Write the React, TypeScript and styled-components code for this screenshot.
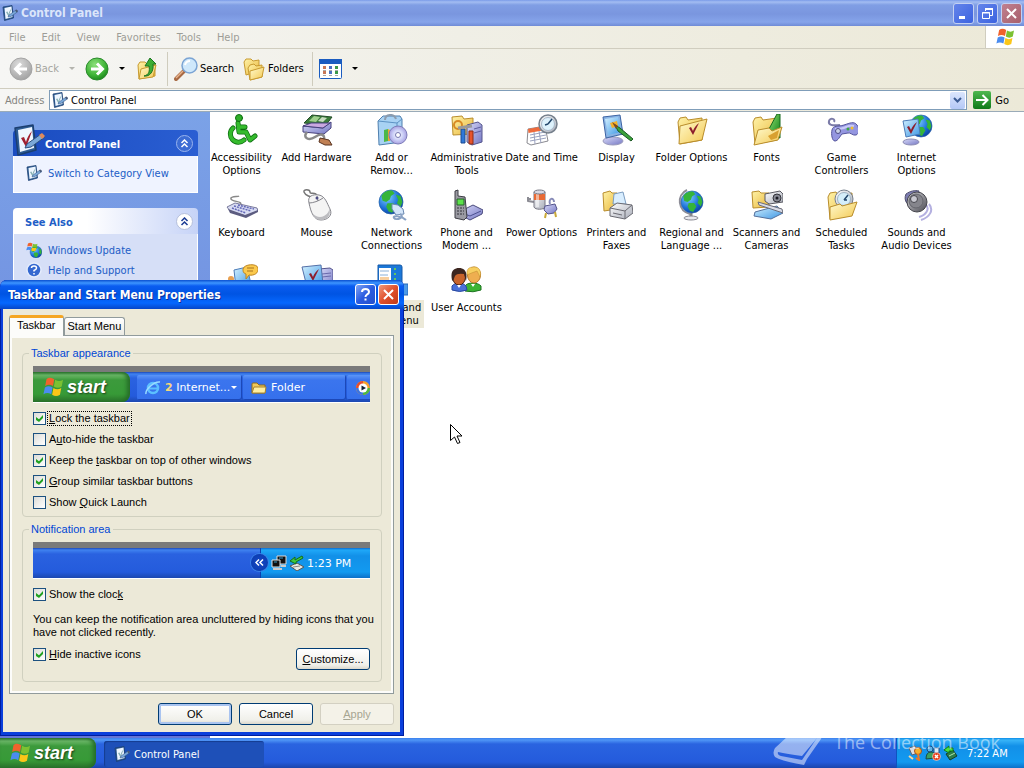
import React, { useState } from "react";
import styled, { createGlobalStyle } from "styled-components";

const TAHOMA = '"DejaVu Sans Condensed", Tahoma, "DejaVu Sans", sans-serif';
const WIDE = '"DejaVu Sans", Verdana, sans-serif';
const SANS = '"Liberation Sans", Arial, sans-serif';
const TITLE = '"DejaVu Sans Condensed", "Trebuchet MS", sans-serif';

const GlobalStyle = createGlobalStyle`
  * { box-sizing: border-box; }
  body { margin: 0; font: 11px/13px ${TAHOMA}; color: #000; }
  button, input { font: inherit; color: inherit; }
  button { padding: 0; border: 0; background: none; white-space: nowrap; }
  svg { display: block; flex: none; }
`;

/* ---------- shared paint ---------- */

const stops = (id: string, a: string, b: string, flat = false) => (
  <linearGradient id={id} x1="0" y1="0" x2={flat ? "0" : "1"} y2="1">
    <stop offset="0" stopColor={a} />
    <stop offset="1" stopColor={b} />
  </linearGradient>
);

const PaintStore = styled.svg`
  position: absolute;
`;

const Paints = () => (
  <PaintStore width="0" height="0" aria-hidden="true">
    <defs>
      {stops("folder", "#fff3a8", "#e9b73c")}
      {stops("folderFront", "#fffbd0", "#f3c850")}
      {stops("screen", "#d4f1ff", "#3c96e4")}
      {stops("grey", "#ffffff", "#a8acb8")}
      {stops("violet", "#d9daf8", "#7477c4")}
      {stops("green", "#4fb850", "#0f7a18", true)}
      {stops("leaf", "#8fe070", "#0d7d16")}
      {stops("dark", "#d8d8dc", "#4a4a52")}
      <radialGradient id="globe" cx=".35" cy=".3" r=".8">
        <stop offset="0" stopColor="#7fd2ff" />
        <stop offset=".6" stopColor="#1b6fd8" />
        <stop offset="1" stopColor="#0a3a96" />
      </radialGradient>
      <radialGradient id="disc" cx=".5" cy=".5" r=".5">
        <stop offset="0" stopColor="#fff" />
        <stop offset=".6" stopColor="#c9cdf6" />
        <stop offset="1" stopColor="#a8a0e0" />
      </radialGradient>
      <radialGradient id="goball" cx=".4" cy=".3" r=".8">
        <stop offset="0" stopColor="#8ce07a" />
        <stop offset=".6" stopColor="#3fb437" />
        <stop offset="1" stopColor="#127a14" />
      </radialGradient>
      <radialGradient id="greyball" cx=".4" cy=".3" r=".8">
        <stop offset="0" stopColor="#dcdcdc" />
        <stop offset="1" stopColor="#9c9c9c" />
      </radialGradient>
    </defs>
  </PaintStore>
);

const Globe = ({ x, y, r }: { x: number; y: number; r: number }) => (
  <g transform={`translate(${x} ${y}) scale(${r / 10})`}>
    <circle r="10" fill="url(#globe)" stroke="#2460a8" strokeWidth=".6" />
    <path d="M-8-5C-6-9-2-10 1-9.500L3-7 0-5-1-2-4 0-7-1ZM-3 1L2 1 4 4 1 9-2 8-4 4ZM4-6L8-5 9.500 0 8 4 5 1 6-2Z" fill="#35b43a" />
  </g>
);

const Folder = ({ children }: { children?: React.ReactNode }) => (
  <g strokeLinejoin="round">
    <path d="M2 8L4 4 10 3 12 6 26 4V26L4 30Z" fill="url(#folder)" stroke="#b98d2c" />
    {children}
  </g>
);

const Check = ({ at = "0 0" }: { at?: string }) => (
  <path transform={`translate(${at})`} d="M0 5L2 4 4 8C5 5 7 2 10 0 8 4 6 8 4 12Z" fill="#8d1d2c" />
);

type Art = { size?: number; children: React.ReactNode; box?: string };
const Glyph = ({ size = 32, box = "0 0 32 32", children }: Art) => (
  <svg width={size} height={size} viewBox={box} aria-hidden="true">
    {children}
  </svg>
);

const FlagShapes = () => (
  <g>
    <path d="M4 3C7 1 10 1.500 13 3L11.500 9C8.500 7.500 5.500 7.500 2.500 9Z" fill="#f0622c" />
    <path d="M14 3.500C17 5 20 5 23 3.500L21.500 9.500C18.500 11 15.500 11 12.500 9.500Z" fill="#7cc132" />
    <path d="M2.200 10.500C5 9 8 9 11 10.500L9.500 16.500C6.500 15 3.500 15 .5 16.500Z" fill="#4a8cf0" />
    <path d="M12 11C15 12.500 18 12.500 21 11L19.500 17C16.500 18.500 13.500 18.500 10.500 17Z" fill="#fbc618" />
  </g>
);
const Flag = ({ width }: { width: number }) => (
  <svg width={width} height={width} viewBox="0 1 23 18" aria-hidden="true" preserveAspectRatio="none">
    <FlagShapes />
  </svg>
);

const PanelIcon = ({ size = 16 }: { size?: number }) => (
  <Glyph size={size} box="0 0 32 32">
    <path d="M2 4L20 1 23 26 5 31Z" fill="#2d5c94" stroke="#1c3f70" strokeWidth="1.500" strokeLinejoin="round" />
    <path d="M5 6L19 3 21 24 7 28Z" fill="#eef6ff" />
    <path
      d="M8 14L11 13 13 18C14 14 16 10 19 7 17 13 15 18 13 23Z"
      fill={size > 16 ? "#a02030" : "#86b0b4"}
    />
    <path d="M14 20L28 10 32 13 18 23 12 24Z" fill="#7aa8d8" stroke="#2c4f80" />
    <path d="M26 11L29 9 32 12 29 15Z" fill={size > 16 ? "#e08a5c" : "#4c5c78"} />
  </Glyph>
);

/* ---------- control panel artwork ---------- */

const art: Record<string, React.ReactNode> = {
  access: (
    <g fill="none" strokeLinecap="round" strokeLinejoin="round">
      <g stroke="#0c6d10" strokeWidth="5">
        <path d="M12 9L13 18H20L24 26 29 22M13 13H19M7 14A8 8 0 1 0 18 26" />
      </g>
      <g stroke="#35bb2d" strokeWidth="3.500">
        <path d="M12 9L13 18H20L24 26 29 22M13 13H19M7 14A8 8 0 1 0 18 26" />
      </g>
      <circle cx="13" cy="4" r="3.500" fill="#2fae2a" stroke="#0c6d10" />
    </g>
  ),
  hardware: (
    <g strokeLinejoin="round">
      <path d="M3 9L11 1 31 3 25 11Z" fill="#3b7d3a" stroke="#234a28" />
      <path d="M8 7L13 2 19 3 15 8Z" fill="#9fd08c" />
      <path d="M17 7L21 3 26 4 22 8Z" fill="#c8dcc0" />
      <path d="M2 12L22 14 30 8V14L23 20 2 18Z" fill="url(#violet)" stroke="#46407c" />
      <path d="M2 12L10 9 29 9 22 14Z" fill="#c9a8e0" stroke="#46407c" />
      <path d="M6 18C1 24 8 27 14 23S24 20 23 26" fill="none" stroke="#8a8a8a" strokeWidth="2.500" />
      <path d="M19 24L28 26 31 31 24 31 18 28Z" fill="#c08054" stroke="#5a3420" />
    </g>
  ),
  programs: (
    <g strokeLinejoin="round">
      <path d="M2 7L7 2H24L26 5V28L3 31Z" fill="#a8d2f4" stroke="#4f7fae" />
      <path d="M2 7L21 9 26 5M21 9V29" fill="none" stroke="#5d92c4" />
      <path d="M9 6C9 0 18-1 20 5" fill="none" stroke="#8c9cae" strokeWidth="2" />
      <path d="M8 16L12 15V27L8 28Z" fill="#4cb84a" />
      <path d="M12 15L14 16V27L12 27Z" fill="#f4a430" />
      <circle cx="22" cy="21" r="9" fill="url(#disc)" stroke="#7d7cb8" />
      <circle cx="22" cy="21" r="2.500" fill="#fff" stroke="#7577b0" />
    </g>
  ),
  admin: (
    <g strokeLinejoin="round">
      <path d="M1 3L11 2 13 5 22 4V20L2 21Z" fill="url(#folder)" stroke="#b98d2c" />
      <path d="M16 11L27 8 31 11V28L21 31 16 28Z" fill="url(#violet)" stroke="#54548c" />
      <path d="M23 15L30 13M23 19L30 17" stroke="#5d5da0" />
      <circle cx="7" cy="11" r="4" fill="none" stroke="#d88a24" strokeWidth="2" />
      <path d="M10 15H14V29H10Z" fill="#2f78d8" stroke="#1c4a90" />
      <path d="M18 17H22V30H18Z" fill="#e8542c" stroke="#8d2c14" />
      <path d="M7 14L21 12" stroke="#999" strokeWidth="3" />
    </g>
  ),
  date: (
    <g strokeLinejoin="round">
      <path d="M2 15L19 12 22 27 5 31 1 29Z" fill="#fff" stroke="#8a8a90" />
      <path d="M2 15L19 12 19.500 16 2.500 19Z" fill="#ee6a3c" />
      <path d="M4 21L19 18M4 24L20 21M4 27L20 24M8 18L9 30M13 17L15 29" stroke="#9aa2c0" fill="none" />
      <circle cx="22" cy="10" r="9" fill="url(#grey)" stroke="#76808c" strokeWidth="1.500" />
      <circle cx="22" cy="10" r="6.500" fill="#def2fc" stroke="#a8b8c8" />
      <path d="M22 10L26 5M22 10L19 11" stroke="#24486c" strokeWidth="1.500" />
    </g>
  ),
  display: (
    <g strokeLinejoin="round">
      <ellipse cx="12" cy="27" rx="10" ry="4" fill="url(#violet)" stroke="#9a9abc" />
      <path d="M2 3L19 1 22 20 5 24Z" fill="#8ab4e4" stroke="#3c64a4" />
      <path d="M4 5L17 3 20 18 7 21Z" fill="url(#screen)" />
      <path d="M9 9L16 7 17 12 11 14Z" fill="#f4b02c" />
      <path d="M14 11L19 14 32 25 30 27 17 17Z" fill="#3ba23a" stroke="#1c5824" />
      <path d="M11 8L17 12 15 15Z" fill="#7a4a24" />
    </g>
  ),
  folderOptions: (
    <g>
      <Folder>
        <path d="M4 12L31 5 26 26 3 30Z" fill="url(#folderFront)" stroke="#b98d2c" />
      </Folder>
      <Check at="13 9" />
    </g>
  ),
  fonts: (
    <g>
      <Folder>
        <path d="M18 15L26 0H29L29 24 24 23Z" fill="url(#leaf)" stroke="#14691c" />
        <path d="M7 16L18 14 21 17 31 13 27 26 3 31Z" fill="url(#folderFront)" stroke="#b98d2c" />
        <path d="M17 22L28 16 26 24 20 26Z" fill="#d9a030" />
      </Folder>
    </g>
  ),
  game: (
    <g strokeLinejoin="round">
      <path d="M14 11C6 12 2 11 3 7S10 5 8 8" fill="none" stroke="#7c7ca8" strokeWidth="2" />
      <path d="M6 16C7 11 12 13 18 11S28 7 31 11 33 20 30 21 24 18 22 19L16 20C14 22 12 27 9 27S5 20 6 16Z" fill="#9496e0" stroke="#54549c" />
      <path d="M9 15Q16 15 20 13T28 12" fill="none" stroke="#c8caf8" strokeWidth="2" />
      <circle cx="12" cy="17" r="2.500" fill="#c8d0e8" stroke="#4c4c84" />
      <circle cx="26" cy="14" r="1.500" fill="#f0c030" />
      <circle cx="22" cy="15" r="1.500" fill="#3ca840" />
    </g>
  ),
  internet: (
    <g strokeLinejoin="round">
      <Globe x={20} y={12} r={11} />
      <ellipse cx="10" cy="28" rx="8" ry="3" fill="url(#violet)" stroke="#8c8cb4" />
      <path d="M2 7L17 5 19 20 5 23Z" fill="url(#screen)" stroke="#4c7cb8" />
      <Check at="6 8" />
    </g>
  ),
  keyboard: (
    <g strokeLinejoin="round">
      <path d="M14 16C18 12 6 13 5 10S12 8 13 7" fill="none" stroke="#888" strokeWidth="1.500" />
      <path d="M1 18L9 14 31 19 32 22 20 27 4 22Z" fill="#d8dcf2" stroke="#7a7a9c" />
      <path d="M2 20L19 26 32 21V23L20 29 4 24Z" fill="#5c5c80" />
      <path d="M8 17L25 22M12 16L28 20M6 19L20 24" stroke="#6468b8" strokeWidth="1.500" strokeDasharray="2 1" fill="none" />
    </g>
  ),
  mouse: (
    <g>
      <path d="M14 8C10 9 4 6 3 3S9 0 9 3 15 2 16 7" fill="none" stroke="#777" strokeWidth="1.500" />
      <path d="M8 14C6 7 12 5 18 6S26 14 29 20 27 31 20 31 10 24 8 14Z" fill="#f4f4f4" stroke="#85858c" />
      <path d="M28 18C31 26 26 31 20 31Q14 30 11 24 17 30 23 27T28 18Z" fill="#bcbcc0" />
      <path d="M8 14C12 14 18 12 22 9M16 7L17 12" stroke="#85858c" fill="none" />
      <circle cx="16" cy="9" r="1.500" fill="#4c4c84" />
    </g>
  ),
  network: (
    <g>
      <Globe x={15} y={13} r={12} />
      <path d="M16 15L22 16 27 20 28 25 20 26 16 20Z" fill="#d4e6fa" stroke="#6a88b0" />
      <path d="M24 25C30 28 20 32 18 29S26 27 30 31" fill="none" stroke="#8aa2c4" strokeWidth="2" />
    </g>
  ),
  phone: (
    <g strokeLinejoin="round">
      <path d="M10 22L22 16 32 21 31 25 19 31 9 26Z" fill="url(#violet)" stroke="#4a4a7c" />
      <path d="M14 25L19 27 30 22" fill="none" stroke="#4c5090" />
      <path d="M4 2L7 1V7L14 8 16 28 13 31 4 29Z" fill="#9a9aa2" stroke="#3c3c44" />
      <path d="M6 10H13V16H6Z" fill="#5ce04a" stroke="#27632a" />
      <path d="M6 19H13M6 22H13M6 25H13" stroke="#33333a" strokeDasharray="2 1" />
    </g>
  ),
  power: (
    <g strokeLinejoin="round">
      <path d="M8 13L2 12V8M2 10H5" fill="none" stroke="#8c8c94" strokeWidth="2" />
      <path d="M8 3H19V18C18 21 9 21 8 18Z" fill="url(#grey)" stroke="#777782" />
      <path d="M8 5H19V11H8Z" fill="#e86a34" />
      <path d="M10 5H13V18H10Z" fill="#fff" opacity=".5" />
      <ellipse cx="13.500" cy="3" rx="5.500" ry="2" fill="#d8d8e4" stroke="#777782" />
      <path d="M19 17L29 15 31 20 28 24 22 25 18 21Z" fill="url(#violet)" stroke="#54548c" />
      <path d="M20 24L19 29M29 23L30 28" stroke="#c8a838" strokeWidth="2" />
      <path d="M24 15C22 9 28 8 28 13" fill="none" stroke="#888cb8" strokeWidth="2" />
    </g>
  ),
  printer: (
    <g strokeLinejoin="round">
      <path d="M2 4L9 2 11 4H16V20L3 22Z" fill="url(#folder)" stroke="#b98d2c" />
      <path d="M13 5L22 3 25 15H12Z" fill="#d9eeff" stroke="#7b9cc0" />
      <path d="M9 19L16 14 31 16 32 24 24 30 9 27Z" fill="url(#grey)" stroke="#6a6a72" />
      <path d="M9 19L24 22 31 16M24 22V30M12 24L21 26" fill="none" stroke="#6a6a72" />
    </g>
  ),
  regional: (
    <g>
      <path d="M15 28V24" stroke="#888" strokeWidth="3" />
      <ellipse cx="15" cy="29" rx="7" ry="2" fill="#e8e8ee" stroke="#8a8a94" />
      <path d="M11 1C0 6 2 22 14 25" fill="none" stroke="#8c8c96" strokeWidth="2" />
      <Globe x={16} y={13} r={11} />
    </g>
  ),
  scanner: (
    <g strokeLinejoin="round">
      <path d="M1 3L8 2 10 4H18V18L2 19Z" fill="url(#folder)" stroke="#b98d2c" />
      <path d="M4 23L26 17 32 24 20 30 3 27Z" fill="url(#screen)" stroke="#54709c" />
      <path d="M7 13L31 20 32 24 8 16Z" fill="#d8dce8" stroke="#6c6c78" />
      <path d="M14 5L29 2 32 5V13L18 15 14 12Z" fill="url(#grey)" stroke="#5a5a62" />
      <circle cx="26" cy="9" r="4" fill="#888a94" stroke="#33333a" />
      <circle cx="26" cy="9" r="1.500" fill="#1c1c24" />
    </g>
  ),
  tasks: (
    <g>
      <Folder>
        <circle cx="18" cy="10" r="9" fill="url(#grey)" stroke="#76808c" />
        <circle cx="18" cy="10" r="6.500" fill="#d4eefa" stroke="#a0b4c4" />
        <path d="M18 11L22 6M18 11H21" stroke="#24486c" strokeWidth="1.500" />
        <path d="M4 18L14 15 16 17 31 13 26 27 4 31Z" fill="url(#folderFront)" stroke="#b98d2c" />
      </Folder>
    </g>
  ),
  sounds: (
    <g>
      <path d="M25 16C29 20 25 26 18 28M28 15C33 21 29 28 20 31" fill="none" stroke="#b4b0e0" strokeWidth="2" />
      <path d="M5 5C9 2 14 1 18 2L13 18C7 17 2 12 5 5Z" fill="#7c7cb0" stroke="#4c4c6c" />
      <circle cx="16" cy="13" r="10" fill="url(#dark)" stroke="#45454c" />
      <circle cx="15" cy="12" r="7" fill="#85858c" stroke="#65656c" />
      <circle cx="13" cy="10" r="3.500" fill="#c8c8d0" stroke="#45454c" />
    </g>
  ),
  speech: (
    <g strokeLinejoin="round">
      <path d="M8 6L21 3 25 20 10 24Z" fill="url(#screen)" stroke="#4c7cb8" />
      <circle cx="5" cy="15" r="3" fill="#e8a050" />
      <path d="M17 5C18 0 31-1 32 4S28 12 23 11L20 15 20 10C17 9 17 7 17 5Z" fill="#fbc94c" stroke="#bd8420" />
      <path d="M21 4H28M21 7H27" stroke="#a87420" />
    </g>
  ),
  system: (
    <g strokeLinejoin="round">
      <path d="M18 5L29 4 32 6V26L21 28 18 25Z" fill="url(#violet)" stroke="#54548c" />
      <path d="M21 10L30 9M21 13L30 12" stroke="#6a6aac" />
      <path d="M1 3L20 1 22 20 6 23Z" fill="url(#screen)" stroke="#5470a8" />
      <Check at="8 5" />
    </g>
  ),
  taskbar: (
    <g>
      <path d="M2 1H24Q26 1 26 3V26H2Z" fill="#1c78d8" stroke="#1458a8" />
      <path d="M3 4H15V25H3Z" fill="#fff" />
      <path d="M4 7H13M4 11H12M5 19H12" stroke="#8ab0d8" />
      <path d="M4 14H13M4 16H13" stroke="#f0a040" />
      <path d="M18 5H20M18 10H20M18 15H20" stroke="#64c860" strokeWidth="2" />
      <path d="M10 20H32V31H10Z" fill="#4c9ae8" stroke="#2868b8" />
    </g>
  ),
  users: (
    <g strokeLinejoin="round">
      <path d="M14 27V22C16 18 27 18 30 22V26Q22 29 14 27Z" fill="#3bb434" stroke="#1c7420" />
      <ellipse cx="23" cy="11" rx="6.500" ry="8" fill="#eeae50" stroke="#b87828" />
      <path d="M16 11C15 3 20 3 24 3S31 8 29 13L26 7Q20 9 16 11Z" fill="#f7cf60" stroke="#bd8b2c" strokeWidth=".5" />
      <path d="M1 26V22C4 18 12 18 15 22L16 26Q9 29 1 26Z" fill="#4a70d8" stroke="#2848a0" />
      <ellipse cx="8" cy="13" rx="6.500" ry="8" fill="#c8642c" stroke="#401c10" />
      <path d="M1 16C-1 7 3 4 8 4S17 7 15 17L13 10Q6 9 4 12L2 17Z" fill="#3c2620" />
      <path d="M6 21L8 24 10 21M20 20L22 23 24 20" fill="#fff" />
    </g>
  ),
};

/* ---------- explorer window ---------- */

const Desktop = styled.div`
  position: relative;
  display: flex;
  flex-direction: column;
  min-height: 100vh;
  overflow: hidden;
  background: #fff;
`;

const TitleBar = styled.header`
  display: flex;
  align-items: center;
  gap: 3px;
  height: 26px;
  padding: 0 2px;
  background: linear-gradient(#7a9be8 0, #a3bdf2 2px, #809ee4 5px, #7a96df 14px, #86a4ea 22px, #6f8bd6 26px);
`;

const WindowTitle = styled.h1<{ $active?: boolean }>`
  flex: 1;
  margin: 0;
  font: bold 12px/16px ${TITLE};
  color: ${(p) => (p.$active ? "#fff" : "#dbe5fa")};
  text-shadow: ${(p) => (p.$active ? "1px 1px #0a2f9c" : "none")};
`;

const CaptionButton = styled.button<{ $tone: "blue" | "dim" | "red" | "dimRed" }>`
  display: grid;
  place-items: center;
  width: 21px;
  height: 21px;
  border: 1px solid ${(p) => (p.$tone === "dim" || p.$tone === "dimRed" ? "#c3d0f2" : "#fff")};
  border-radius: 3px;
  background: ${(p) =>
    ({
      blue: "linear-gradient(135deg, #7fa4f4, #2a5be0 50%, #2450cc)",
      dim: "linear-gradient(135deg, #6484ea, #3c63e0)",
      red: "linear-gradient(135deg, #f09a7c, #e0502c 50%, #c03a18)",
      dimRed: "linear-gradient(135deg, #c08090, #a8606c)",
    })[p.$tone]};
`;

const barFade = "linear-gradient(90deg, #f6f6f4, #f0efe6 45%, #ece9d8)";

const MenuBar = styled.nav`
  display: flex;
  align-items: stretch;
  height: 23px;
  border-bottom: 1px solid #d0cdbf;
  padding-left: 1px;
  background: ${barFade};
`;

const MenuButton = styled.button`
  padding: 0 8px;
  color: #9d9d97;
`;

const FlagCell = styled.div`
  display: grid;
  place-items: center;
  width: 39px;
  margin-left: auto;
  border-left: 1px solid #d0cdbf;
  background: #fff;
`;

const ToolBar = styled.div`
  display: flex;
  align-items: center;
  height: 40px;
  padding-left: 5px;
  border-bottom: 1px solid #d0cdbf;
  background: ${barFade};
`;

const ToolButton = styled.button<{ $dim?: boolean }>`
  display: flex;
  align-items: center;
  gap: 2px;
  height: 34px;
  padding: 0 4px;
  color: ${(p) => (p.$dim ? "#a5a59f" : "#000")};
`;

const ArrowButton = styled.button<{ $dim?: boolean }>`
  width: 18px;
  height: 34px;
  display: grid;
  place-items: center;
  &::before {
    content: "";
    border: 3px solid transparent;
    border-bottom: 0;
    border-top-color: ${(p) => (p.$dim ? "#b4b4ae" : "#000")};
  }
`;

const Separator = styled.span`
  width: 1px;
  height: 34px;
  margin: 0 2px 0 4px;
  background: #cfccbd;
`;

const AddressBar = styled.form`
  display: flex;
  align-items: center;
  height: 23px;
  padding: 1px 15px 1px 5px;
  border-bottom: 1px solid #9aabb8;
  background: ${barFade};
`;

const AddressLabel = styled.label`
  width: 44px;
  color: #85857f;
`;

const AddressField = styled.div`
  display: flex;
  flex: 1;
  align-items: center;
  gap: 3px;
  height: 20px;
  padding: 0 1px 0 2px;
  border: 1px solid #7f9db9;
  background: #fff;
`;

const AddressInput = styled.input`
  flex: 1;
  min-width: 0;
  padding: 0;
  border: 0;
  outline: 0;
  background: none;
`;

const DropButton = styled.button`
  display: grid;
  place-items: center;
  width: 15px;
  height: 17px;
  border-radius: 2px;
  background: linear-gradient(#dbe6fd, #b4c8f6);
`;

const GoButton = styled.button`
  display: flex;
  align-items: center;
  gap: 4px;
  margin-left: 6px;
`;

const Content = styled.div`
  display: flex;
  flex: 1;
`;

const Sidebar = styled.aside`
  display: flex;
  flex-direction: column;
  gap: 15px;
  width: 210px;
  padding: 18px 12px 0 13px;
  background: linear-gradient(#7ba2e7, #6375d6);
`;

const Panel = styled.section`
  display: flex;
  flex-direction: column;
`;

const PanelHead = styled.div<{ $primary?: boolean }>`
  display: flex;
  align-items: center;
  height: 26px;
  padding: 0 5px 0 ${(p) => (p.$primary ? "0" : "12px")};
  border-radius: 4px 4px 0 0;
  background: ${(p) =>
    p.$primary ? "linear-gradient(90deg, #1a4cc0, #2a5ed2)" : "linear-gradient(90deg, #fff 40%, #c6d3f7)"};
  color: ${(p) => (p.$primary ? "#fff" : "#215dc6")};
  svg { align-self: flex-end; }
`;

const PanelTitle = styled.h2`
  flex: 1;
  margin: 0;
  padding-top: 2px;
  font: bold 11px/13px ${TAHOMA};
`;

const Chevron = styled.button<{ $primary?: boolean }>`
  display: grid;
  place-items: center;
  width: 17px;
  height: 17px;
  border: 1px solid ${(p) => (p.$primary ? "#9ab4ee" : "#b5bfdc")};
  border-radius: 50%;
  background: ${(p) => (p.$primary ? "#3c6cd4" : "#fff")};
  svg { align-self: center; }
`;

const PanelBody = styled.div<{ $primary?: boolean }>`
  display: flex;
  flex-direction: column;
  gap: 4px;
  padding: ${(p) => (p.$primary ? "9px 12px 11px" : "8px 12px 11px")};
  border: 1px solid #fff;
  border-top: 0;
  background: ${(p) => (p.$primary ? "#eff3ff" : "#d6dff7")};
`;

const PanelLink = styled.a`
  display: flex;
  align-items: center;
  gap: 6px;
  color: #215dc6;
  text-decoration: none;
`;

const IconGrid = styled.main`
  display: grid;
  flex: 1;
  grid-template-columns: repeat(auto-fill, 75px);
  grid-auto-rows: 75px;
  margin-left: -6px;
  padding-top: 2px;
`;

const IconItem = styled.a`
  display: flex;
  flex-direction: column;
  align-items: center;
  gap: 4px;
  color: #000;
  text-align: center;
  text-decoration: none;
`;

const IconLabel = styled.span<{ $selected?: boolean }>`
  padding: 1px 3px;
  white-space: pre;
  background: ${(p) => (p.$selected ? "#ece9d8" : "none")};
`;

/* ---------- properties dialog ---------- */

const DialogFrame = styled.section`
  position: absolute;
  left: 0;
  top: 280px;
  width: 404px;
  padding: 0 4px 4px 3px;
  border-radius: 7px 7px 0 0;
  background: #0a3fdc;
  box-shadow: inset -1px -1px #001ea0, inset 1px 0 #001ea0;
  font-family: ${SANS};
`;

const DialogTitle = styled.header`
  display: flex;
  align-items: center;
  gap: 2px;
  height: 29px;
  margin: 0 -4px 0 -3px;
  padding: 0 5px 0 8px;
  border-radius: 7px 7px 0 0;
  background: linear-gradient(#0a4fd0 0, #3d95ff 3px, #0a5cf0 6px, #0054e3 14px, #0668ff 23px, #0646c8 29px);
`;

const DialogBody = styled.div`
  padding: 6px 6px 7px;
  background: #ece9d8;
`;

const Tabs = styled.div`
  display: flex;
  align-items: flex-end;
  height: 20px;
`;

const Tab = styled.button<{ $on?: boolean }>`
  position: relative;
  height: ${(p) => (p.$on ? "21px" : "18px")};
  margin-bottom: ${(p) => (p.$on ? "-1px" : "0")};
  padding: ${(p) => (p.$on ? "0 7px 4px" : "0 3px")};
  border: 1px solid #919b9c;
  border-top: ${(p) => (p.$on ? "3px solid #f5a623" : "1px solid #919b9c")};
  border-bottom: 0;
  border-radius: 3px 3px 0 0;
  background: ${(p) => (p.$on ? "#fcfcfa" : "linear-gradient(#fff, #ecebe4)")};
`;

const TabPage = styled.div`
  display: flex;
  flex-direction: column;
  gap: 6px;
  padding: 11px 11px 11px 12px;
  border: 1px solid #919b9c;
  background: #ece9d8;
  box-shadow: inset 2px 2px #fcfcfa, inset -2px -2px #fcfcfa;
`;

const Group = styled.fieldset`
  min-width: 0;
  margin: 0;
  padding: 6px 11px 7px 10px;
  border: 1px solid #d0d0bf;
  border-radius: 4px;
`;

const Legend = styled.legend`
  margin-left: -4px;
  padding: 0 2px;
  color: #0046d5;
`;

const Preview = styled.div`
  display: flex;
  align-items: stretch;
  height: 37px;
  overflow: hidden;
  border-top: 6px solid #7a7a7a;
  border-bottom: 1px solid #fff;
  background: linear-gradient(#1d48b8 0, #3f82f0 2px, #2a62e0 6px, #245bdc 24px, #1c48b0 30px);
  color: #fff;
  font-family: ${WIDE};
`;

const StartFace = styled.span<{ $w: number }>`
  display: flex;
  flex: none;
  align-items: center;
  gap: 4px;
  width: ${(p) => p.$w}px;
  padding-left: 10px;
  border-radius: 0 8px 8px 0;
  background: linear-gradient(#2f7a30 0, #6cb868 3px, #3c9a3c 8px, #379a37 22px, #2b742b 30px);
  box-shadow: inset -3px 0 4px #256c28;
  color: #fff;
  font: italic bold 18px/20px ${SANS};
  text-shadow: 1px 1px 2px #1b3c18;
`;

const PreviewTask = styled.span<{ $w: number }>`
  display: flex;
  flex: none;
  align-items: center;
  gap: 4px;
  width: ${(p) => p.$w}px;
  height: 25px;
  margin: 3px 1px 0 0;
  padding-left: 8px;
  border-radius: 2px;
  background: linear-gradient(#5c95f8, #3b75ee 5px, #3570ec);
  box-shadow: inset -1px -1px #1c48b8;
  b { color: #f8d878; }
`;

const MoreMark = styled.i`
  margin-left: -3px;
  border: 3px solid transparent;
  border-top-color: #fff;
  border-bottom: 0;
`;

const TaskGap = styled.span`
  flex: none;
  width: 7px;
`;

const PreviewTray = styled.span`
  position: relative;
  display: flex;
  align-items: center;
  width: 110px;
  margin-left: auto;
  padding-left: 10px;
  gap: 2px;
  border-left: 1px solid #0c3fae;
  background: linear-gradient(#0c6ad0 0, #1fa8f8 2px, #1290e8 8px, #129af0 24px, #0c70c8 30px);
`;

const TrayChevron = styled.span`
  position: absolute;
  left: -10px;
  top: 6px;
  display: grid;
  place-items: center;
  width: 17px;
  height: 17px;
  border-radius: 50%;
  background: radial-gradient(#1448c8, #0a38a8);
  box-shadow: 0 0 0 1px #3a80e8;
`;

const Checks = styled.div`
  display: flex;
  flex-direction: column;
  gap: 8px;
  padding: 9px 0 0;
`;

const CheckRow = styled.label`
  display: flex;
  align-items: center;
  gap: 2px;
  height: 13px;
`;

const CheckBox = styled.input`
  appearance: none;
  width: 13px;
  height: 13px;
  margin: 0;
  border: 1px solid #1c5180;
  background: linear-gradient(135deg, #dcdcd7, #fff);
  &:checked::before {
    content: "";
    display: block;
    width: 7px;
    height: 7px;
    margin: 2px;
    background: #21a121;
    clip-path: polygon(0 29%, 43% 62%, 100% 0, 100% 43%, 43% 100%, 0 71%);
  }
`;

const CheckText = styled.span<{ $focus?: boolean }>`
  padding: 0 1px;
  outline: ${(p) => (p.$focus ? "1px dotted #000" : "none")};
`;

const Note = styled.p`
  margin: 12px -8px 9px 0;
`;

const SplitRow = styled.div`
  display: flex;
  align-items: flex-start;
  justify-content: space-between;
  padding-bottom: 4px;
`;

const PushButton = styled.button<{ $default?: boolean }>`
  width: 74px;
  height: 22px;
  border: 1px solid #003c74;
  border-radius: 3px;
  background: linear-gradient(#fff, #f0f0ea 80%, #dcd8cc);
  box-shadow: ${(p) => (p.$default ? "inset 0 0 0 2px #a9c4f0" : "none")};
  &:disabled {
    border-color: #d3d0c2;
    background: #f4f2e8;
    color: #a6a592;
  }
`;

const Buttons = styled.div`
  display: flex;
  justify-content: flex-end;
  gap: 7px;
  padding-top: 9px;
`;

/* ---------- taskbar ---------- */

const TaskBar = styled.footer`
  display: flex;
  align-items: stretch;
  height: 30px;
  background: linear-gradient(#3a80ee 0, #4f96f6 2px, #2a64e0 6px, #245bdc 24px, #1b45ac 30px);
  color: #fff;
`;

const StartButton = styled.button`
  display: flex;
  margin-right: 8px;
`;

const TaskButton = styled.button`
  display: flex;
  align-items: center;
  gap: 4px;
  width: 160px;
  height: 26px;
  margin-top: 3px;
  padding-left: 10px;
  border-radius: 3px;
  background: #1e50b8;
  box-shadow: inset 1px 1px 1px #143c90;
`;

const Tray = styled.div`
  display: flex;
  align-items: center;
  gap: 2px;
  width: 128px;
  margin-left: auto;
  padding-left: 10px;
  border-left: 1px solid #0f53c0;
  background: linear-gradient(#0c8ce8 0, #38b4f8 2px, #1290e8 8px, #129af0 24px, #0c70c8 30px);
  time { margin-left: 6px; }
`;

const Watermark = styled.div`
  position: absolute;
  right: 24px;
  bottom: 0;
  display: flex;
  align-items: flex-start;
  gap: 11px;
  height: 35px;
  color: rgba(255, 255, 255, 0.5);
  font: 18px/18px "Open Sans", sans-serif;
  pointer-events: none;
`;

const Pointer = styled.svg`
  position: absolute;
  left: 450px;
  top: 424px;
  pointer-events: none;
`;

/* ---------- small drawings ---------- */

const DoubleChevron = ({ color, left }: { color: string; left?: boolean }) => (
  <svg width="9" height="9" viewBox="0 0 9 9" aria-hidden="true">
    <path
      d="M1.500 4L4.500 1 7.500 4M1.500 8L4.500 5 7.500 8"
      transform={left ? "rotate(-90 4.500 4.500)" : undefined}
      fill="none"
      stroke={color}
      strokeWidth="1.500"
    />
  </svg>
);

const Ball = ({ dim }: { dim?: boolean }) => (
  <Glyph size={24} box="0 0 24 24">
    <circle cx="12" cy="12" r="11" fill={dim ? "url(#greyball)" : "url(#goball)"} stroke={dim ? "#a4a4a4" : "#2b8a2c"} />
    <path
      d="M6 12H17M12 6.500L17.500 12 12 17.500"
      transform={dim ? "rotate(180 12 12)" : undefined}
      fill="none"
      stroke="#fff"
      strokeWidth="3"
    />
  </Glyph>
);

const FolderUp = () => (
  <Glyph size={24} box="0 0 24 24">
    <path d="M3 8L5 5H10L12 7 20 6V19L4 22Z" fill="url(#folder)" stroke="#c79a30" />
    <path d="M6 12L21 8 18 20 4 22Z" fill="url(#folderFront)" stroke="#c79a30" />
    <path d="M9 19C14 18 15 14 14 9H10L15 1 21 7H18C19 14 15 20 9 19Z" fill="#3cae34" stroke="#1c7420" />
  </Glyph>
);

const SearchIcon = () => (
  <Glyph size={24} box="0 0 24 24">
    <path d="M2 22L10 14" stroke="#a86a44" strokeWidth="4" strokeLinecap="round" />
    <path d="M2 21L9 14" stroke="#e8b48c" strokeWidth="1.500" />
    <circle cx="15.500" cy="8.500" r="7.500" fill="#cfe8fb" stroke="#7ba4d4" strokeWidth="1.500" />
    <path d="M11 8Q12 4 16 4" stroke="#fff" strokeWidth="2" fill="none" />
  </Glyph>
);

const FoldersIcon = () => (
  <Glyph size={24} box="0 0 24 24">
    <path d="M2 5L4 2H9L11 4 17 3V14L4 18Z" fill="url(#folder)" stroke="#c79a30" />
    <path d="M6 11L8 8 12 7 14 9 20 8V20L8 23Z" fill="url(#folder)" stroke="#c79a30" />
    <path d="M8 14L22 10 20 20 8 23Z" fill="url(#folderFront)" stroke="#c79a30" />
  </Glyph>
);

const ViewsIcon = () => (
  <svg width="23" height="20" viewBox="0 0 23 20" aria-hidden="true">
    <rect x=".5" y=".5" width="22" height="19" rx="1" fill="#fff" stroke="#1a5cc0" />
    <path d="M0 2.500H23" stroke="#1a5cc0" strokeWidth="5" />
    <path d="M4 8.500H7M4 13.500H7" stroke="#c87858" strokeWidth="3" />
    <path d="M10 8.500H13M10 13.500H13" stroke="#4c70c0" strokeWidth="3" />
    <path d="M16 8.500H19M16 13.500H19" stroke="#3c9848" strokeWidth="3" />
    <path d="M4 11.500H7M10 11.500H13M16 11.500H19M4 16.500H7M10 16.500H13M16 16.500H19" stroke="#a8a8a8" />
  </svg>
);

const SmallIE = () => (
  <Glyph size={16} box="0 0 16 16">
    <circle cx="8" cy="8" r="5" fill="none" stroke="#5cc0ff" strokeWidth="2.500" />
    <path d="M4 8.500H13" stroke="#5cc0ff" strokeWidth="2" />
    <path d="M1 14C0 10 9 1 15 2" stroke="#9adcff" strokeWidth="1.500" fill="none" />
  </Glyph>
);

const SmallFolder = () => (
  <Glyph size={16} box="0 0 16 16">
    <path d="M1 4Q1 3 2 3H6L8 5H14V13H1Z" fill="#f0c858" stroke="#8d6a1c" />
    <path d="M1 13L3 7H15L14 13Z" fill="#ffeea0" stroke="#a8842c" />
  </Glyph>
);

const MediaIcon = () => (
  <Glyph size={16} box="0 0 16 16">
    <circle cx="8" cy="8" r="7" fill="#f8a028" />
    <path d="M8 1A7 7 0 0 0 1 8H8Z" fill="#e84c2c" />
    <path d="M1 8A7 7 0 0 0 8 15V8Z" fill="#3c74e0" />
    <path d="M8 15A7 7 0 0 0 15 8H8Z" fill="#4cb840" />
    <circle cx="8" cy="8" r="4.500" fill="#fff" />
    <path d="M6.500 5.500L11 8 6.500 10.500Z" fill="#123" />
  </Glyph>
);

const TrayComputers = () => (
  <Glyph size={16} box="0 0 16 16">
    <path d="M6 1H15V9H6Z" fill="#111" stroke="#ddd" />
    <path d="M1 5H9V12H1Z" fill="#111" stroke="#e4e4e4" />
    <path d="M2 14H11M10 11H15" stroke="#ccc" strokeWidth="2" />
    <path d="M3 7H6M8 3H12" stroke="#3c9cc8" />
  </Glyph>
);

const TraySafe = () => (
  <Glyph size={16} box="0 0 16 16">
    <path d="M1 11L8 8 15 12 8 16Z" fill="#e8e8e0" stroke="#555" />
    <path d="M4 12L11 11" stroke="#888" />
    <path d="M13 1L6 5V2L1 6 7 9V7L14 3Z" fill="#3cc83c" stroke="#156c1c" />
  </Glyph>
);

const TrayKeys = () => (
  <Glyph size={16} box="0 0 16 16">
    <path d="M2 3L8 1 11 8 5 10Z" fill="#d8dce4" stroke="#5c6470" />
    <circle cx="11" cy="6" r="3.500" fill="#f4b02c" stroke="#a8501c" />
    <path d="M11 9L12 15 9 13" stroke="#e87828" strokeWidth="2" fill="none" />
    <path d="M2 11L6 14" stroke="#f4d8a0" strokeWidth="2" />
  </Glyph>
);

const TrayNetwork = () => (
  <Glyph size={16} box="0 0 16 16">
    <circle cx="5" cy="4" r="3" fill="#5cb4e8" stroke="#1c4c80" />
    <path d="M1 14Q1 7 6 7T10 13Z" fill="#3ca060" stroke="#1c4c40" />
    <path d="M9 3H14V8H9Z" fill="#d8ecfa" stroke="#1c4c80" />
    <circle cx="11.500" cy="11.500" r="4" fill="#e8401c" stroke="#fff" strokeWidth=".5" />
    <path d="M10 10L13 13M13 10L10 13" stroke="#fff" strokeWidth="1.500" />
  </Glyph>
);

const TrayCard = () => (
  <Glyph size={16} box="0 0 16 16">
    <path d="M3 9L10 5 14 11 7 15Z" fill="#2c7c48" stroke="#143c28" />
    <path d="M6 11L12 8" stroke="#b0e8b0" />
    <path d="M1 5L6 1V3H10V6H6V8Z" fill="#4ce03c" stroke="#147c1c" />
  </Glyph>
);

/* ---------- data ---------- */

const applets: { name: string; icon: string; selected?: boolean }[] = [
  { name: "Accessibility\nOptions", icon: "access" },
  { name: "Add Hardware", icon: "hardware" },
  { name: "Add or\nRemov...", icon: "programs" },
  { name: "Administrative\nTools", icon: "admin" },
  { name: "Date and Time", icon: "date" },
  { name: "Display", icon: "display" },
  { name: "Folder Options", icon: "folderOptions" },
  { name: "Fonts", icon: "fonts" },
  { name: "Game\nControllers", icon: "game" },
  { name: "Internet\nOptions", icon: "internet" },
  { name: "Keyboard", icon: "keyboard" },
  { name: "Mouse", icon: "mouse" },
  { name: "Network\nConnections", icon: "network" },
  { name: "Phone and\nModem ...", icon: "phone" },
  { name: "Power Options", icon: "power" },
  { name: "Printers and\nFaxes", icon: "printer" },
  { name: "Regional and\nLanguage ...", icon: "regional" },
  { name: "Scanners and\nCameras", icon: "scanner" },
  { name: "Scheduled\nTasks", icon: "tasks" },
  { name: "Sounds and\nAudio Devices", icon: "sounds" },
  { name: "Speech", icon: "speech" },
  { name: "System", icon: "system" },
  { name: "Taskbar and\nStart Menu", icon: "taskbar", selected: true },
  { name: "User Accounts", icon: "users" },
];

type Option = { label: React.ReactNode; on: boolean; focus?: boolean };
const taskbarOptions: Option[] = [
  { label: <><u>L</u>ock the taskbar</>, on: true, focus: true },
  { label: <>A<u>u</u>to-hide the taskbar</>, on: false },
  { label: <>Keep the <u>t</u>askbar on top of other windows</>, on: true },
  { label: <><u>G</u>roup similar taskbar buttons</>, on: true },
  { label: <>Show <u>Q</u>uick Launch</>, on: false },
];

const OptionRow = ({ label, on, focus }: Option) => {
  const [checked, setChecked] = useState(on);
  return (
    <CheckRow>
      <CheckBox type="checkbox" checked={checked} onChange={(e) => setChecked(e.target.checked)} />
      <CheckText $focus={focus}>{label}</CheckText>
    </CheckRow>
  );
};

const Cross = () => (
  <Glyph size={13} box="0 0 13 13">
    <path d="M2 2L11 11M11 2L2 11" stroke="#fff" strokeWidth="2" />
  </Glyph>
);

const PropertiesDialog = () => (
  <DialogFrame role="dialog" aria-labelledby="dialog-title">
    <DialogTitle>
      <WindowTitle as="h2" id="dialog-title" $active>Taskbar and Start Menu Properties</WindowTitle>
      <CaptionButton $tone="blue" aria-label="Help">
        <Glyph size={13} box="0 0 13 13">
          <path d="M3 4Q3 1 6.500 1T10 4Q10 5.500 8 6.500 6.500 7.500 6.500 9M6.500 10.500V12.500" fill="none" stroke="#fff" strokeWidth="2" />
        </Glyph>
      </CaptionButton>
      <CaptionButton $tone="red" aria-label="Close"><Cross /></CaptionButton>
    </DialogTitle>
    <DialogBody>
      <Tabs role="tablist">
        <Tab role="tab" aria-selected="true" $on>Taskbar</Tab>
        <Tab role="tab" aria-selected="false">Start Menu</Tab>
      </Tabs>
      <TabPage role="tabpanel">
        <Group>
          <Legend>Taskbar appearance</Legend>
          <Preview>
            <StartFace $w={97}><Flag width={20} />start</StartFace>
            <TaskGap />
            <PreviewTask $w={105}><SmallIE /><span><b>2</b> Internet...</span><MoreMark /></PreviewTask>
            <PreviewTask $w={103}><SmallFolder />Folder</PreviewTask>
            <PreviewTask $w={60}><MediaIcon /></PreviewTask>
          </Preview>
          <Checks>
            {taskbarOptions.map((o, i) => <OptionRow key={i} {...o} />)}
          </Checks>
        </Group>
        <Group>
          <Legend>Notification area</Legend>
          <Preview>
            <PreviewTray>
              <TrayChevron><DoubleChevron color="#fff" left /></TrayChevron>
              <TrayComputers />
              <TraySafe />
              <time>1:23 PM</time>
            </PreviewTray>
          </Preview>
          <Checks>
            <OptionRow label={<>Show the cloc<u>k</u></>} on />
          </Checks>
          <Note>
            You can keep the notification area uncluttered by hiding icons that you have not clicked recently.
          </Note>
          <SplitRow>
            <OptionRow label={<><u>H</u>ide inactive icons</>} on />
            <PushButton><u>C</u>ustomize...</PushButton>
          </SplitRow>
        </Group>
      </TabPage>
      <Buttons>
        <PushButton $default>OK</PushButton>
        <PushButton>Cancel</PushButton>
        <PushButton disabled><u>A</u>pply</PushButton>
      </Buttons>
    </DialogBody>
  </DialogFrame>
);

export default function App() {
  const [address, setAddress] = useState("Control Panel");
  return (
    <Desktop>
      <GlobalStyle />
      <Paints />
      <TitleBar>
        <PanelIcon />
        <WindowTitle>Control Panel</WindowTitle>
        <CaptionButton $tone="dim" aria-label="Minimize">
          <Glyph size={13} box="0 0 13 13"><path d="M2 10.500H8" stroke="#fff" strokeWidth="3" /></Glyph>
        </CaptionButton>
        <CaptionButton $tone="dim" aria-label="Restore">
          <Glyph size={13} box="0 0 13 13">
            <path d="M4.500 4V1.500H11.500V8.500H9" fill="none" stroke="#fff" />
            <path d="M4 2H12" stroke="#fff" strokeWidth="2" />
            <path d="M1.500 5.500H8.500V11.500H1.500ZM1 6H9" fill="none" stroke="#fff" />
          </Glyph>
        </CaptionButton>
        <CaptionButton $tone="dimRed" aria-label="Close"><Cross /></CaptionButton>
      </TitleBar>
      <MenuBar>
        {["File", "Edit", "View", "Favorites", "Tools", "Help"].map((m) => <MenuButton key={m}>{m}</MenuButton>)}
        <FlagCell><Flag width={18} /></FlagCell>
      </MenuBar>
      <ToolBar>
        <ToolButton $dim><Ball dim />Back</ToolButton>
        <ArrowButton $dim aria-label="Back history" />
        <ToolButton aria-label="Forward"><Ball /></ToolButton>
        <ArrowButton aria-label="Forward history" />
        <ToolButton aria-label="Up"><FolderUp /></ToolButton>
        <Separator />
        <ToolButton><SearchIcon />Search</ToolButton>
        <ToolButton><FoldersIcon />Folders</ToolButton>
        <Separator />
        <ToolButton aria-label="Views"><ViewsIcon /></ToolButton>
        <ArrowButton aria-label="View options" />
      </ToolBar>
      <AddressBar onSubmit={(e) => e.preventDefault()}>
        <AddressLabel htmlFor="address">Address</AddressLabel>
        <AddressField>
          <PanelIcon />
          <AddressInput id="address" type="text" value={address} onChange={(e) => setAddress(e.target.value)} />
          <DropButton type="button" aria-label="Show addresses">
            <svg width="9" height="6" viewBox="0 0 9 6"><path d="M1 1L4.500 4.500 8 1" fill="none" stroke="#3c5c94" strokeWidth="2" /></svg>
          </DropButton>
        </AddressField>
        <GoButton type="submit">
          <Glyph size={18} box="0 0 18 18">
            <rect width="18" height="18" rx="2" fill="url(#green)" />
            <path d="M3 9H14M9.500 4L14.500 9 9.500 14" fill="none" stroke="#fff" strokeWidth="2" />
          </Glyph>
          Go
        </GoButton>
      </AddressBar>
      <Content>
        <Sidebar>
          <Panel>
            <PanelHead $primary>
              <PanelIcon size={32} />
              <PanelTitle>Control Panel</PanelTitle>
              <Chevron $primary aria-label="Collapse"><DoubleChevron color="#fff" /></Chevron>
            </PanelHead>
            <PanelBody $primary>
              <PanelLink href="#category"><PanelIcon />Switch to Category View</PanelLink>
            </PanelBody>
          </Panel>
          <Panel>
            <PanelHead>
              <PanelTitle>See Also</PanelTitle>
              <Chevron aria-label="Collapse"><DoubleChevron color="#1c3c94" /></Chevron>
            </PanelHead>
            <PanelBody>
              <PanelLink href="#update">
                <Glyph size={16} box="0 0 16 16">
                  <Globe x={10} y={10} r={6} />
                  <g transform="scale(.5)"><FlagShapes /></g>
                </Glyph>
                Windows Update
              </PanelLink>
              <PanelLink href="#help">
                <Glyph size={16} box="0 0 16 16">
                  <circle cx="8" cy="8" r="7" fill="#3468d0" stroke="#e4ecfc" strokeWidth="1.500" />
                  <path d="M5.500 6Q5.500 4 8 4T10.500 6Q10.500 7.500 8 8.500V9.500M8 11V12.500" fill="none" stroke="#fff" strokeWidth="1.500" />
                </Glyph>
                Help and Support
              </PanelLink>
            </PanelBody>
          </Panel>
        </Sidebar>
        <IconGrid>
          {applets.map((a) => (
            <IconItem key={a.name} href={`#${a.icon}`}>
              <Glyph>{art[a.icon]}</Glyph>
              <IconLabel $selected={a.selected}>{a.name}</IconLabel>
            </IconItem>
          ))}
        </IconGrid>
      </Content>
      <PropertiesDialog />
      <TaskBar>
        <StartButton>
          <StartFace $w={96}><Flag width={20} />start</StartFace>
        </StartButton>
        <TaskButton><PanelIcon />Control Panel</TaskButton>
        <Tray>
          <TrayKeys />
          <TrayNetwork />
          <TrayCard />
          <time>7:22 AM</time>
        </Tray>
      </TaskBar>
      <Watermark>
        <svg width="50" height="34" viewBox="0 0 50 34" aria-hidden="true">
          <path d="M15 3Q17 0 21 0H45Q50 1 48 6L34 26 31 32Q8 28 2 24-1 20 2 15ZM5 19Q4 22 8 23L29 27 44 5 29 23Q14 21 5 19Z" fill="currentColor" fillRule="evenodd" />
        </svg>
        The Collection Book
      </Watermark>
      <Pointer width="16" height="24" viewBox="0 0 16 24" aria-hidden="true">
        <path d="M.5.500V16.500L4.500 13 7.500 19.500 10 18.500 7 12H12Z" fill="#fff" stroke="#000" />
      </Pointer>
    </Desktop>
  );
}
